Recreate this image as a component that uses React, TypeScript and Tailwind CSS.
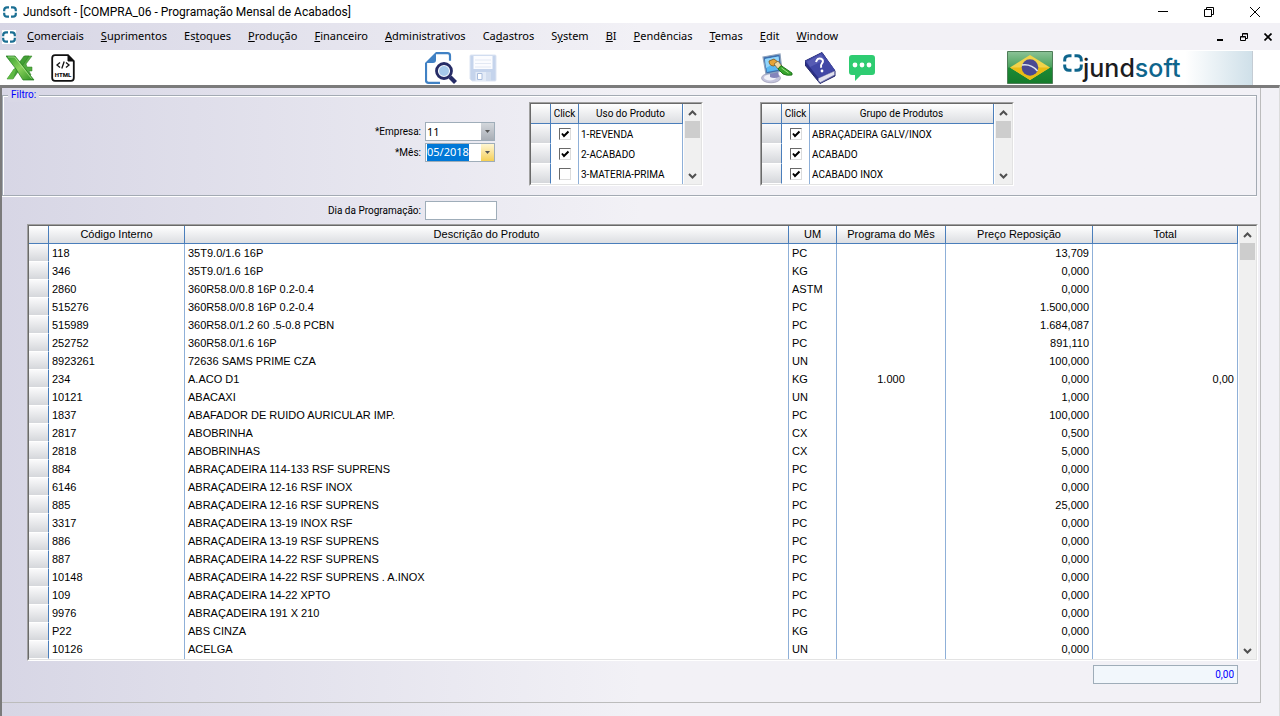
import { useEffect, useRef, type ReactNode } from "react";
import clsx from "clsx";

const menus = [
  ["", "C", "omerciais"],
  ["", "S", "uprimentos"],
  ["Es", "t", "oques"],
  ["", "P", "rodução"],
  ["", "F", "inanceiro"],
  ["", "A", "dministrativos"],
  ["Ca", "d", "astros"],
  ["S", "y", "stem"],
  ["", "B", "I"],
  ["", "P", "endências"],
  ["", "T", "emas"],
  ["", "E", "dit"],
  ["", "W", "indow"],
];

type Row = {
  code: string;
  name: string;
  um: string;
  program?: string;
  price: string;
  total?: string;
};

const rows: Row[] = [
  { code: "118", name: "35T9.0/1.6 16P", um: "PC", price: "13,709" },
  { code: "346", name: "35T9.0/1.6 16P", um: "KG", price: "0,000" },
  { code: "2860", name: "360R58.0/0.8 16P 0.2-0.4", um: "ASTM", price: "0,000" },
  { code: "515276", name: "360R58.0/0.8 16P 0.2-0.4", um: "PC", price: "1.500,000" },
  { code: "515989", name: "360R58.0/1.2 60 .5-0.8 PCBN", um: "PC", price: "1.684,087" },
  { code: "252752", name: "360R58.0/1.6 16P", um: "PC", price: "891,110" },
  { code: "8923261", name: "72636 SAMS PRIME CZA", um: "UN", price: "100,000" },
  { code: "234", name: "A.ACO D1", um: "KG", program: "1.000", price: "0,000", total: "0,00" },
  { code: "10121", name: "ABACAXI", um: "UN", price: "1,000" },
  { code: "1837", name: "ABAFADOR DE RUIDO AURICULAR IMP.", um: "PC", price: "100,000" },
  { code: "2817", name: "ABOBRINHA", um: "CX", price: "0,500" },
  { code: "2818", name: "ABOBRINHAS", um: "CX", price: "5,000" },
  { code: "884", name: "ABRAÇADEIRA 114-133 RSF SUPRENS", um: "PC", price: "0,000" },
  { code: "6146", name: "ABRAÇADEIRA 12-16 RSF INOX", um: "PC", price: "0,000" },
  { code: "885", name: "ABRAÇADEIRA 12-16 RSF SUPRENS", um: "PC", price: "25,000" },
  { code: "3317", name: "ABRAÇADEIRA 13-19 INOX RSF", um: "PC", price: "0,000" },
  { code: "886", name: "ABRAÇADEIRA 13-19 RSF SUPRENS", um: "PC", price: "0,000" },
  { code: "887", name: "ABRAÇADEIRA 14-22 RSF SUPRENS", um: "PC", price: "0,000" },
  { code: "10148", name: "ABRAÇADEIRA 14-22 RSF SUPRENS . A.INOX", um: "PC", price: "0,000" },
  { code: "109", name: "ABRAÇADEIRA 14-22 XPTO", um: "PC", price: "0,000" },
  { code: "9976", name: "ABRAÇADEIRA 191 X 210", um: "PC", price: "0,000" },
  { code: "P22", name: "ABS CINZA", um: "KG", price: "0,000" },
  { code: "10126", name: "ACELGA", um: "UN", price: "0,000" },
];

const usos = [
  { label: "1-REVENDA", checked: true },
  { label: "2-ACABADO", checked: true },
  { label: "3-MATERIA-PRIMA", checked: false },
];

const grupos = [
  { label: "ABRAÇADEIRA GALV/INOX", checked: true },
  { label: "ACABADO", checked: true },
  { label: "ACABADO INOX", checked: true },
];

function AppIcon() {
  return (
    <svg viewBox="0 0 14 12" className="h-3 w-3.5" fill="none" stroke="#1b6f93" strokeWidth="2.2">
      <path d="M6 1.3H4Q1.2 1.3 1.2 4v1.200M8 1.3h2q2.800 0 2.800 2.700v1.200M6 10.7H4Q1.2 10.7 1.2 8V6.800M8 10.7h2q2.800 0 2.800-2.700V6.800" />
    </svg>
  );
}

function ExcelIcon() {
  return (
    <svg viewBox="0 0 30 28" className="h-7 w-[30px]">
      <defs>
        <linearGradient id="xl" x1="0" y1="0" x2="1" y2="1">
          <stop offset="0" stopColor="#2f9d2c" />
          <stop offset=".5" stopColor="#8ad25c" />
          <stop offset="1" stopColor="#2c8f22" />
        </linearGradient>
      </defs>
      <path d="M19 2h7l-6 8 1 3h5v4h-3l2 4-9 1-5-8z" fill="#54ad42" stroke="#2d7d20" strokeWidth=".5" />
      <path d="M18 2h5L7 25H1z" fill="#43a036" stroke="#2a7720" strokeWidth=".5" />
      <path d="M0 2h9l8 10 11 14H17l-7-11z" fill="url(#xl)" stroke="#1f7a1c" strokeWidth=".7" />
      <path d="m10 15.500-3 9.500H1l6.500-10z" fill="#5fb845" />
      <path d="M2 3h6.500l17 21.500" fill="none" stroke="#b7e69b" strokeWidth=".7" />
    </svg>
  );
}

function HtmlIcon() {
  return (
    <svg viewBox="0 0 24 28" className="h-7 w-6">
      <path d="M4 1.200h13l5.800 5.800v17q0 2.800-2.800 2.800H4q-2.800 0-2.800-2.800V4Q1.200 1.200 4 1.200z" fill="#fff" stroke="#111" strokeWidth="1.800" />
      <path d="M17 1v6h6z" fill="#111" stroke="#111" />
      <path d="m9 8.500-3 2.500 3 2.500M15 8.500l3 2.500-3 2.500M13.200 7.500l-2.400 7" fill="none" stroke="#111" strokeWidth="1.300" />
      <text x="12" y="23" textAnchor="middle" fontSize="6" fontWeight="900" fontFamily="Roboto, sans-serif" fill="#111">HTML</text>
    </svg>
  );
}

function SearchIcon() {
  return (
    <svg viewBox="0 0 32 32" className="size-8">
      <path d="M11 1.200h11.500q2.500 0 2.500 2.500v5M15 30.800H3.500q-2.500 0-2.500-2.500V11" fill="none" stroke="#4081c4" strokeWidth="2.200" />
      <path d="M0 11 11 0v8q0 3-3 3z" fill="#4081c4" />
      <circle cx="19" cy="19" r="9" fill="#fff" />
      <circle cx="19" cy="19" r="7.500" fill="#f4f8fd" stroke="#262c66" strokeWidth="2.800" />
      <circle cx="19" cy="19" r="5" fill="#a6c9ea" />
      <path d="m25 25 5.500 5.500" stroke="#262c66" strokeWidth="4.200" />
    </svg>
  );
}

function DiskIcon() {
  return (
    <svg viewBox="0 0 28 28" className="size-7">
      <path d="M2 1h24q1 0 1 1v24q0 1-1 1H3l-2-2V2q0-1 1-1z" fill="#c5d4ec" stroke="#dde5f3" />
      <path d="M4.500 2h19v13h-19z" fill="#fbfcff" />
      <path d="M6 6h16M6 9.500h16M6 13h16" stroke="#e3e9f4" />
      <path d="M6.500 18h15v9h-15z" fill="#e3ebf7" />
      <path d="M8.500 19.500h4.500v6H8.500z" fill="#fff" stroke="#a9bddd" />
      <path d="M17 18h4.500v9H17z" fill="#d3deef" />
    </svg>
  );
}

function PaintIcon() {
  return (
    <svg viewBox="0 0 32 32" className="size-8">
      <ellipse cx="10" cy="26" rx="9.500" ry="4.800" fill="#c4c4dc" stroke="#9b9bb4" strokeWidth=".7" />
      <ellipse cx="9" cy="25.500" rx="6" ry="3" fill="#f1f1f8" />
      <path d="M9 18h8l1 7q-5 2-9 0z" fill="#8484bb" />
      <path d="M2 5 19 2l2 17-16 3z" fill="#3e6fae" stroke="#8fa3bd" strokeWidth="1.200" />
      <path d="m4 7 13.500-2.500L19 17.500 6 20z" fill="#58b7f2" />
      <path d="m4 7 13.500-2.500.500 4L5 16z" fill="#93d6fb" />
      <path d="m8 9 5-2 4 3-4 4q-5 0-5-5z" fill="#e5a436" stroke="#7d5518" strokeWidth=".8" />
      <path d="m13 12 4-3 4 5-4 3z" fill="#ecd9a6" stroke="#6d5a35" strokeWidth=".7" />
      <path d="M20 13.500 31 21v2q-5 1-9-1l-5-5z" fill="#37a52c" stroke="#1a6b17" strokeWidth=".9" />
      <path d="m20.500 16 7 5" stroke="#a1e287" />
    </svg>
  );
}

function BookIcon() {
  return (
    <svg viewBox="0 0 32 32" className="size-8">
      <path d="M0 9 17 .5 30 19v5l-15 7.500L13 29 0 13z" fill="#2b2f86" stroke="#232767" />
      <path d="M13.500 26 29.500 19v4L15.500 30.500q-3-1-2-4.500z" fill="#e1e1ee" stroke="#7c7fb5" strokeWidth=".8" />
      <path d="M0 9 17 .5 30 18 13.500 26z" fill="#4148a6" />
      <path d="m2 9.500 14-7.200 4 5.500L5 15z" fill="#6469bd" opacity=".6" />
      <path d="M11 10q1.500-4.500 5-3.300 3.500 2 .8 5-1.300 1.500-.6 4" fill="none" stroke="#fff" strokeWidth="2" />
      <circle cx="17" cy="19" r="1.400" fill="#fff" />
    </svg>
  );
}

function ChatIcon() {
  return (
    <svg viewBox="0 0 26 26" className="size-[26px]">
      <path d="M3 0h20q3 0 3 3v14q0 3-3 3H12l-6 6v-6H3q-3 0-3-3V3q0-3 3-3z" fill="#2ecc71" />
      <circle cx="6" cy="10" r="2.400" fill="#fff" />
      <circle cx="13" cy="10" r="2.400" fill="#fff" />
      <circle cx="20" cy="10" r="2.400" fill="#fff" />
    </svg>
  );
}

function Flag() {
  return (
    <svg viewBox="0 0 46 33" className="h-[33px] w-[46px]">
      <defs>
        <linearGradient id="fl" x1="0" y1="0" x2="0" y2="1">
          <stop offset="0" stopColor="#8cc397" />
          <stop offset=".48" stopColor="#4ba25d" />
          <stop offset=".52" stopColor="#1c8a35" />
          <stop offset="1" stopColor="#157a2c" />
        </linearGradient>
      </defs>
      <path d="M.500.500h45v32H.500z" fill="url(#fl)" stroke="#4f7d58" />
      <path d="M23 4 43 16.500 23 29 3 16.500z" fill="#f0d34a" />
      <path d="M3 16.500h40L23 29z" fill="#e8bc14" />
      <circle cx="23" cy="16.500" r="8.300" fill="#4a4a92" />
      <path d="M15 14q9-1.500 15.500 6" fill="none" stroke="#dfe5ee" strokeWidth="1.700" />
    </svg>
  );
}

function Logo() {
  return (
    <div className="flex h-[34px] w-[192px] items-start border-r border-[#c4ccd4] bg-linear-to-r from-white from-65% to-[#cfe0e9]">
      <svg viewBox="0 0 20 18" className="mt-[3px] ml-0.5 h-[18px] w-5" fill="none" stroke="#0e658c" strokeWidth="3">
        <path d="M8.500 1.700H6Q1.700 1.700 1.700 6v1.500M11.500 1.700H14q4.300 0 4.300 4.300v1.500M8.500 16.300H6Q1.700 16.300 1.700 12v-1.500M11.500 16.300H14q4.300 0 4.300-4.300v-1.500" />
      </svg>
      <span className="font-['Inter'] text-[25px] leading-[34px] font-medium text-[#1c1c1e]">
        jund<span className="text-[#0e658c]">soft</span>
      </span>
    </div>
  );
}

function ToolButton({ label, disabled, children }: { label: string; disabled?: boolean; children: ReactNode }) {
  return (
    <button type="button" aria-label={label} disabled={disabled} className="shrink-0">
      {children}
    </button>
  );
}

// sunken two-tone border around every grid
function Sunken({ className, children }: { className?: string; children: ReactNode }) {
  return (
    <div className={clsx("border border-t-[#a0a0a0] border-r-white border-b-white border-l-[#a0a0a0]", className)}>
      <div className="flex h-full overflow-hidden border border-t-[#696969] border-r-[#e3e3e3] border-b-[#e3e3e3] border-l-[#696969] bg-white">
        {children}
      </div>
    </div>
  );
}

function ScrollBar() {
  return (
    <div className="ml-px flex w-[17px] shrink-0 flex-col justify-between bg-[#f0f0f0]">
      <div>
        <button type="button" aria-label="Rolar para cima" className="flex h-[17px] w-full items-center justify-center">
          <svg viewBox="0 0 9 6" className="h-1.5 w-[9px]" fill="none" stroke="#505050" strokeWidth="2">
            <path d="M1 5l3.500-3.500L8 5" />
          </svg>
        </button>
        <div className="mx-px h-[17px] bg-[#cdcdcd]" />
      </div>
      <button type="button" aria-label="Rolar para baixo" className="flex h-[17px] w-full items-center justify-center">
        <svg viewBox="0 0 9 6" className="h-1.5 w-[9px]" fill="none" stroke="#505050" strokeWidth="2">
          <path d="M1 1l3.500 3.500L8 1" />
        </svg>
      </button>
    </div>
  );
}

function Th({ children }: { children?: ReactNode }) {
  return (
    <th
      scope="col"
      className="border-r border-b border-[#4a7ebb] bg-linear-to-b from-white to-[#dcdee2] p-0 text-center font-normal whitespace-nowrap"
    >
      {children}
    </th>
  );
}

function Selector() {
  return (
    <td className="border-r border-b border-r-[#4a7ebb] border-b-white bg-linear-to-b from-[#fafafb] to-[#d5d7db] p-0" />
  );
}

const cell = "border-r border-[#8fb0d8] px-[3px] py-0 whitespace-nowrap";

function CheckGrid({ title, items, className }: { title: string; items: typeof usos; className?: string }) {
  return (
    <Sunken className={clsx("h-[84px]", className)}>
      <table className="w-full table-fixed border-separate border-spacing-0 leading-[19px]">
        <colgroup>
          <col className="w-5" />
          <col className="w-7" />
          <col />
        </colgroup>
        <thead>
          <tr className="h-5">
            <Th />
            <Th>Click</Th>
            <Th>{title}</Th>
          </tr>
        </thead>
        <tbody>
          {items.map((item) => (
            <tr key={item.label} className="h-5">
              <Selector />
              <td className="border-r border-[#8fb0d8] p-0">
                <div className="relative mx-auto size-3">
                  <input
                    type="checkbox"
                    id={item.label}
                    defaultChecked={item.checked}
                    className="peer block size-3 appearance-none border border-t-[#696969] border-r-[#dcdcdc] border-b-[#dcdcdc] border-l-[#696969] bg-white"
                  />
                  <svg viewBox="0 0 12 12" className="pointer-events-none absolute inset-0 hidden peer-checked:block">
                    <path d="M3 5.500 5 8l4.500-4.500" fill="none" stroke="#000" strokeWidth="2" />
                  </svg>
                </div>
              </td>
              <td className="border-r border-[#8fb0d8] px-0.5 py-0 whitespace-nowrap">
                <label htmlFor={item.label} className="block">{item.label}</label>
              </td>
            </tr>
          ))}
        </tbody>
      </table>
      <ScrollBar />
    </Sunken>
  );
}

function Arrow() {
  return (
    <svg viewBox="0 0 5 3" className="h-[3px] w-[5px]">
      <path d="M0 0h5L2.500 3z" fill="#555" />
    </svg>
  );
}

export default function App() {
  const month = useRef<HTMLInputElement>(null);

  useEffect(() => {
    month.current?.focus();
    month.current?.select();
  }, []);

  return (
    <div className="flex min-h-screen flex-col bg-[#f2f1f6] font-['Roboto',sans-serif] text-[10px] text-black">
      <header>
        <div className="flex h-[23px] items-center bg-white pl-[3px]">
          <AppIcon />
          <h1 className="ml-1.5 flex-1 text-[12px]">Jundsoft - [COMPRA_06 - Programação Mensal de Acabados]</h1>
          <div className="flex items-center gap-9 pr-5">
            <button type="button" aria-label="Minimizar">
              <svg viewBox="0 0 10 10" className="size-2.5" stroke="#000">
                <path d="M0 4.500h10" />
              </svg>
            </button>
            <button type="button" aria-label="Restaurar">
              <svg viewBox="0 0 10 10" className="size-2.5" fill="none" stroke="#000">
                <path d="M.500 2.500h7v7h-7zM2.500 2.500v-2h7v7h-2" />
              </svg>
            </button>
            <button type="button" aria-label="Fechar">
              <svg viewBox="0 0 10 10" className="size-2.5" stroke="#000">
                <path d="m0 0 10 10M10 0 0 10" />
              </svg>
            </button>
          </div>
        </div>
        <div className="flex h-[27px] items-center bg-linear-to-r from-[#d7d6e5] to-[#f2f1f6] to-50% pl-0.5">
          <div className="bg-white py-px">
            <AppIcon />
          </div>
          <nav className="ml-[3px] flex flex-1 gap-px font-['Noto_Sans',sans-serif] text-[11px]">
            {menus.map(([before, key, after]) => (
              <button type="button" key={key + after} className="px-2">
                {before}
                <span className="underline">{key}</span>
                {after}
              </button>
            ))}
          </nav>
          <div className="flex items-center gap-4 pr-2">
            <button type="button" aria-label="Minimizar janela">
              <svg viewBox="0 0 8 8" className="size-2" stroke="#000" strokeWidth="2">
                <path d="M1 7h6" />
              </svg>
            </button>
            <button type="button" aria-label="Restaurar janela">
              <svg viewBox="0 0 8 8" className="size-2" fill="none" stroke="#000">
                <path d="M.500 3.500h5v4h-5zM2.500 3V.500h5v5H6M.500 4h5M2.500 1h5" />
              </svg>
            </button>
            <button type="button" aria-label="Fechar janela">
              <svg viewBox="0 0 8 8" className="size-2" stroke="#000" strokeWidth="1.700">
                <path d="m.500.500 7 7M7.500.500l-7 7" />
              </svg>
            </button>
          </div>
        </div>
        <div className="grid h-[35px] grid-cols-[425fr_336fr_246fr_273fr] items-center bg-white">
          <div className="flex items-center gap-[15px] pl-1.5">
            <ToolButton label="Exportar para Excel"><ExcelIcon /></ToolButton>
            <ToolButton label="Exportar para HTML"><HtmlIcon /></ToolButton>
          </div>
          <div className="flex items-center gap-3">
            <ToolButton label="Pesquisar"><SearchIcon /></ToolButton>
            <ToolButton label="Salvar" disabled><DiskIcon /></ToolButton>
          </div>
          <div className="flex items-center gap-3">
            <ToolButton label="Temas"><PaintIcon /></ToolButton>
            <ToolButton label="Ajuda"><BookIcon /></ToolButton>
            <ToolButton label="Mensagens"><ChatIcon /></ToolButton>
          </div>
          <div className="flex items-center gap-2">
            <Flag />
            <Logo />
          </div>
        </div>
      </header>

      <main className="flex-1 border-t-3 border-r border-l-2 border-t-[#7b7b7b] border-r-[#dcdcdc] border-l-[#7b7b7b] bg-linear-to-r from-[#d7d6e5] to-[#f2f1f6] to-50% pr-[18px]">
        <div className="border-r border-b border-[#bcbcbc] pr-0.5 pb-[18px]">
          <fieldset className="relative mr-px h-[108px] pt-[14px]">
            <div className="absolute inset-x-0 top-[7px] bottom-0 border border-[#a3aab3] shadow-[inset_1px_1px_0_#fff,0_1px_0_#fff]" />
            <legend className="absolute top-0 left-1.5 bg-[#d9d8e6] px-[3px] leading-[14px] text-[#0000ff]">Filtro:</legend>
            <div className="relative flex items-start">
              <div className="grid w-[495px] grid-cols-[1fr_70px] gap-x-1 gap-y-0.5 pt-5 pr-0.5">
                <label htmlFor="empresa" className="text-right leading-[19px]">*Empresa:</label>
                <div className="relative h-[19px]">
                  <select
                    id="empresa"
                    defaultValue="11"
                    className="block h-full w-full appearance-none border border-[#9fadb9] bg-white px-px font-['Noto_Sans'] text-[11px] leading-[17px]"
                  >
                    <option>11</option>
                  </select>
                  <div className="pointer-events-none absolute inset-y-px right-px flex w-[13px] items-center justify-center bg-linear-to-b from-[#d3d7dc] to-[#a9aeb6]">
                    <Arrow />
                  </div>
                </div>
                <label htmlFor="mes" className="text-right leading-[19px]">*Mês:</label>
                <div className="flex h-[19px] border border-[#9fadb9] bg-white">
                  <input
                    ref={month}
                    id="mes"
                    defaultValue="05/2018"
                    className="w-0 flex-1 bg-transparent px-px font-['Noto_Sans'] text-[11px] outline-none selection:bg-[#0078d7] selection:text-white"
                  />
                  <button
                    type="button"
                    aria-label="Escolher mês"
                    className="flex w-[13px] items-center justify-center bg-linear-to-b from-[#fff6d2] to-[#f5cf52]"
                  >
                    <Arrow />
                  </button>
                </div>
              </div>
              <CheckGrid title="Uso do Produto" items={usos} className="ml-8 w-[174px]" />
              <CheckGrid title="Grupo de Produtos" items={grupos} className="ml-[57px] w-[254px]" />
            </div>
          </fieldset>

          <div className="mt-[5px] flex h-[19px]">
            <label htmlFor="dia" className="w-[419px] text-right leading-[19px]">Dia da Programação:</label>
            <input id="dia" className="ml-1 w-[72px] border border-[#9fadb9] bg-white px-1" />
          </div>

          <Sunken className="mt-1 ml-[25px] h-[437px]">
            <table className="w-full table-fixed border-separate border-spacing-0 font-['Liberation_Sans',sans-serif] text-[11px] leading-[17px]">
              <colgroup>
                <col className="w-5" />
                <col className="w-[136px]" />
                <col />
                <col className="w-12" />
                <col className="w-[109px]" />
                <col className="w-[147px]" />
                <col className="w-[145px]" />
              </colgroup>
              <thead>
                <tr>
                  <Th />
                  <Th>Código Interno</Th>
                  <Th>Descrição do Produto</Th>
                  <Th>UM</Th>
                  <Th>Programa do Mês</Th>
                  <Th>Preço Reposição</Th>
                  <Th>Total</Th>
                </tr>
              </thead>
              <tbody>
                {rows.map((row) => (
                  <tr key={row.code} className="h-[18px]">
                    <Selector />
                    <td className={cell}>{row.code}</td>
                    <td className={cell}>{row.name}</td>
                    <td className={cell}>{row.um}</td>
                    <td className={clsx(cell, "text-center")}>{row.program}</td>
                    <td className={clsx(cell, "text-right")}>{row.price}</td>
                    <td className={clsx(cell, "text-right")}>{row.total}</td>
                  </tr>
                ))}
              </tbody>
            </table>
            <ScrollBar />
          </Sunken>

          <div className="mt-1 flex justify-end pr-5">
            <input
              aria-label="Total geral"
              readOnly
              defaultValue="0,00"
              className="h-[19px] w-[145px] border border-[#9fadb9] bg-[#f2f7fc] px-[3px] text-right text-[#0000ff]"
            />
          </div>
        </div>
      </main>
    </div>
  );
}
